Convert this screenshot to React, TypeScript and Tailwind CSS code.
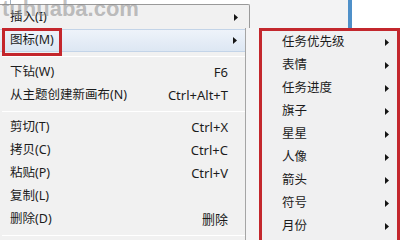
import React from "react";

const Arrow = () => (
  <svg width="4" height="7" viewBox="0 0 4 7" className="block">
    <path d="M0 0L4 3.5L0 7Z" fill="#151515" />
  </svg>
);

type Item = { label: string; shortcut?: string; sub?: boolean; hl?: boolean; boxed?: boolean } | "sep";

const mainItems: Item[] = [
  { label: "插入(I)", sub: true },
  { label: "图标(M)", sub: true, hl: true, boxed: true },
  "sep",
  { label: "下钻(W)", shortcut: "F6" },
  { label: "从主题创建新画布(N)", shortcut: "Ctrl+Alt+T" },
  "sep",
  { label: "剪切(T)", shortcut: "Ctrl+X" },
  { label: "拷贝(C)", shortcut: "Ctrl+C" },
  { label: "粘贴(P)", shortcut: "Ctrl+V" },
  { label: "复制(L)" },
  { label: "删除(D)", shortcut: "删除" },
  "sep",
];

const subItems = ["任务优先级", "表情", "任务进度", "旗子", "星星", "人像", "箭头", "符号", "月份"];

export default function App() {
  return (
    <div className="relative w-[400px] h-[240px] overflow-hidden bg-white flex font-['Noto_Sans','Noto_Sans_CJK_SC',sans-serif] text-[#1c1c1c]">
      {/* main menu column */}
      <div className="w-[250px] flex flex-col shrink-0">
        <div className="h-[5px] pl-[10px] flex">
          <div className="w-px h-full bg-[#9fb0c2]" />
        </div>
        <div className="flex-1 bg-[#f1f1f1] border-t border-r border-[#9a9a9a] rounded-tr-[2px] pt-[1px]">
          {mainItems.map((it, i) =>
            it === "sep" ? (
              <div key={i} className="h-[9px] flex items-center pl-[2px]">
                <div className="w-full h-px bg-[#dadada] border-b border-white" />
              </div>
            ) : (
              <div
                key={i}
                className={
                  "relative h-[23px] flex items-center pl-[10px] text-[12.5px] leading-none " +
                  (it.hl
                    ? "bg-gradient-to-b from-[#eef3fa] to-[#dde7f3] border-y border-r border-[#c3d4e8] rounded-r-[3px]"
                    : "")
                }
              >
                <span className="flex-1">{it.label}</span>
                {it.shortcut && <span className="text-[13px]">{it.shortcut}</span>}
                <span className="w-[21px] pl-[6px] flex items-center">{it.sub && <Arrow />}</span>
                {it.boxed && (
                  <span className="absolute left-[2px] top-[-2px] w-[60px] h-[28px] border-[3px] border-[#c4262c]" />
                )}
              </div>
            )
          )}
        </div>
      </div>

      {/* background to the right */}
      <div className="flex-1 flex">
        <div className="w-[98px] bg-[#f3f3f4]" />
        <div className="w-[4px] bg-[#4f90c9]" />
        <div className="flex-1 bg-white" />
      </div>

      {/* watermark */}
      <div className="absolute left-[2px] top-[-2px] text-[22px] leading-[22px] font-bold font-['Liberation_Sans',sans-serif] text-[#8c8c8c]/55 pointer-events-none">
        tuhuaba.com
      </div>

      {/* submenu flyout */}
      <div className="absolute left-[245px] top-[28px] w-[160px] h-[220px] bg-[#f4f4f5] border-l border-[#a5a5a5] flex">
        <div className="w-[13px]" />
        <div className="w-[141px] h-full border-[3px] border-[#c3272d] bg-[#f0f0f1] flex flex-col">
          {subItems.map((s) => (
            <div key={s} className="h-[23px] shrink-0 flex items-center pl-[20px] pr-[8px] text-[12.5px] leading-none">
              <span className="flex-1">{s}</span>
              <Arrow />
            </div>
          ))}
        </div>
      </div>
    </div>
  );
}
